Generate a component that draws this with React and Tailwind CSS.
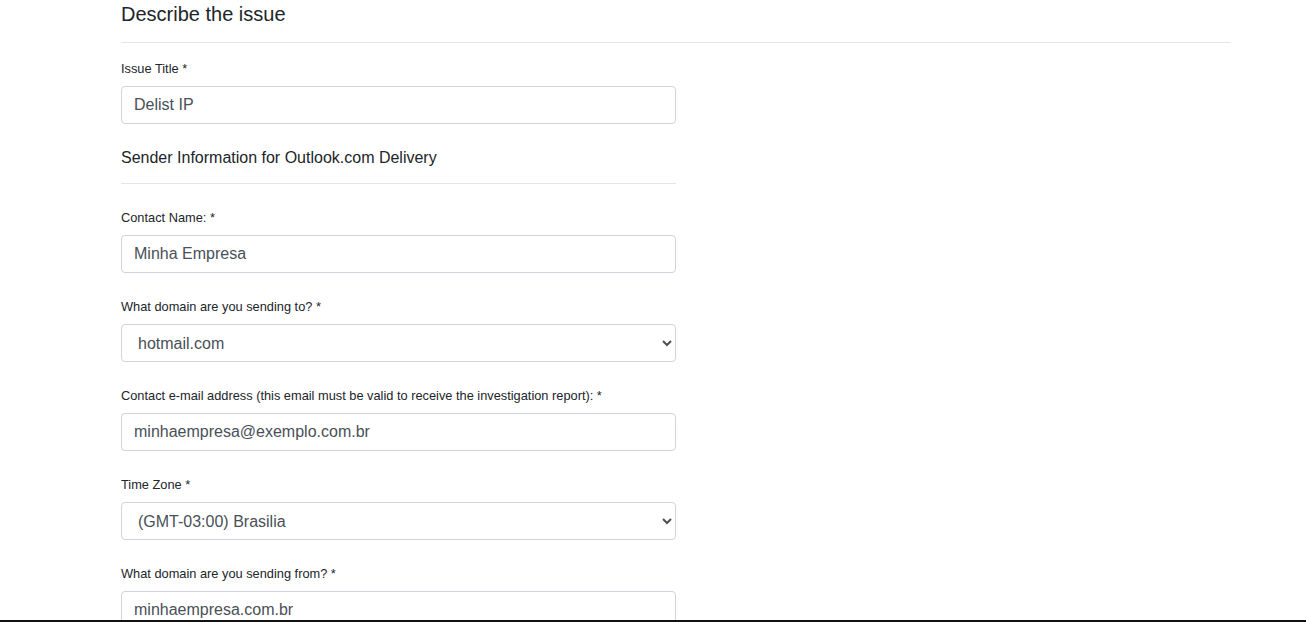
import { useState } from 'react'

const inputCls =
  'block h-[38px] w-full rounded-[4px] border border-[#ced4da] bg-white px-3 text-[16px] text-[#495057] outline-none'

function Field({ label, children, className = '' }) {
  return (
    <div className={className}>
      <label className="mb-[8px] block pt-[1px] text-[12.8px] leading-[18px] text-[#212529]">{label}</label>
      {children}
    </div>
  )
}

export default function App() {
  const [form, setForm] = useState({
    title: 'Delist IP',
    contact: 'Minha Empresa',
    domainTo: 'hotmail.com',
    email: 'minhaempresa@exemplo.com.br',
    tz: '(GMT-03:00) Brasilia',
    domainFrom: 'minhaempresa.com.br',
  })

  const set = (key) => (e) => setForm({ ...form, [key]: e.target.value })

  return (
    <div
      className="box-border h-[622px] overflow-hidden border-b-2 border-[#111] bg-white"
      style={{ fontFamily: '"Liberation Sans", Arial, sans-serif' }}
    >
      <div className="ml-[121px] w-[1110px]">
        {/* Encabezado */}
        <h2 className="text-[20px] leading-[28px] text-[#212529]">Describe the issue</h2>
        <hr className="mt-[14px] border-0 border-t border-[#e5e5e5]" />

        <div className="w-[555px]">
          <Field label="Issue Title *" className="mt-[16px]">
            <input className={inputCls} value={form.title} onChange={set('title')} />
          </Field>

          <h3 className="mt-[22px] text-[16px] leading-[24px] text-[#212529]">
            Sender Information for Outlook.com Delivery
          </h3>
          <hr className="mt-[13px] border-0 border-t border-[#e5e5e5]" />

          <Field label="Contact Name: *" className="mt-[24px]">
            <input className={inputCls} value={form.contact} onChange={set('contact')} />
          </Field>

          <Field label="What domain are you sending to? *" className="mt-[24px]">
            <select className={inputCls} value={form.domainTo} onChange={set('domainTo')}>
              <option>hotmail.com</option>
              <option>outlook.com</option>
              <option>live.com</option>
              <option>msn.com</option>
            </select>
          </Field>

          <Field
            label="Contact e-mail address (this email must be valid to receive the investigation report): *"
            className="mt-[24px]"
          >
            <input className={inputCls} value={form.email} onChange={set('email')} />
          </Field>

          <Field label="Time Zone *" className="mt-[24px]">
            <select className={inputCls} value={form.tz} onChange={set('tz')}>
              <option>(GMT-03:00) Brasilia</option>
              <option>(GMT-05:00) Eastern Time</option>
              <option>(GMT+00:00) UTC</option>
            </select>
          </Field>

          <Field label="What domain are you sending from? *" className="mt-[24px]">
            <input className={inputCls} value={form.domainFrom} onChange={set('domainFrom')} />
          </Field>
        </div>
      </div>
    </div>
  )
}
